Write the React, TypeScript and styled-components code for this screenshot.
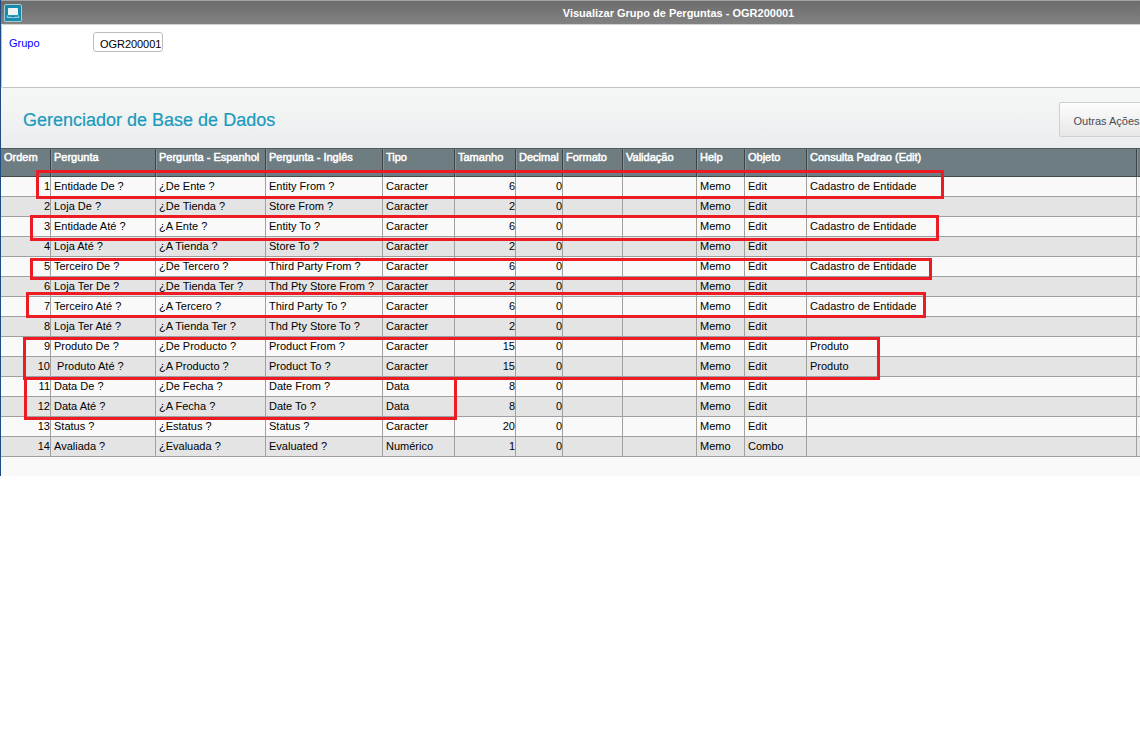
import React from "react";
import styled, { createGlobalStyle } from "styled-components";

const GlobalStyle = createGlobalStyle`
  * { box-sizing: border-box; }
  html, body { margin: 0; background: #fff; overflow: hidden; }
  body { font: 11px/13px "Liberation Sans", Arial, sans-serif; color: #000; }
`;

const Window = styled.main`
  position: relative;
  width: 1140px;
  height: 476px;
  overflow: hidden;
  border-left: 1px solid #1d4d84;
  background: #f9f9f9;
`;

const TitleBar = styled.header`
  display: flex;
  align-items: center;
  height: 24px;
  padding-left: 3px;
  border-top: 1px solid #a3a3a3;
  background: linear-gradient(#6c6c6c, #828282);
`;

const Title = styled.h1`
  flex: 1;
  margin: 2px 0 0;
  padding-left: 195px;
  text-align: center;
  font-size: 11px;
  line-height: 13px;
  color: #fff;
`;

const GroupPanel = styled.section`
  display: flex;
  align-items: flex-start;
  height: 64px;
  padding: 7px 0 0 7px;
  border: 1px solid #c3c3c3;
  border-top: 1px solid #d2d2d2;
  border-right: 0;
  border-radius: 2px 0 0 2px;
  background: #fff;
`;

const Label = styled.label`
  width: 84px;
  padding-top: 5px;
  color: #0000ff;
`;

const GroupField = styled.div`
  width: 70px;
  height: 20px;
  padding: 5px 0 0 6px;
  border: 1px solid #bdbdbd;
  border-radius: 3px;
  white-space: nowrap;
  letter-spacing: -0.05px;
  color: #000;
`;

const Toolbar = styled.section`
  display: flex;
  justify-content: space-between;
  height: 60px;
  padding-left: 22px;
  background: linear-gradient(#f5f6f6, #f3f5f4 30%, #ebecef);
`;

const Heading = styled.h2`
  margin: 22px 0 0;
  font-size: 18px;
  line-height: 21px;
  font-weight: 400;
  color: #1a9abc;
  -webkit-text-stroke: 0.2px #1a9abc;
  white-space: nowrap;
`;

const ActionsButton = styled.button`
  flex: none;
  width: 90px;
  height: 35px;
  margin: 14px -9px 0 0;
  padding: 3px 0 0 13.5px;
  border: 1px solid #d0d0d0;
  border-radius: 2px;
  background: linear-gradient(#fdfdfd, #e7e7e7);
  font: 11px/13px "Liberation Sans", Arial, sans-serif;
  text-align: left;
  white-space: nowrap;
  color: #474b55;
`;

const Row = styled.div<{ $alt?: boolean }>`
  display: grid;
  grid-template-columns: 50px 105px 110px 117px 72px 61px 47px 60px 74px 48px 62px 330px 3px;
  height: 20px;
  background: ${(p) => (p.$alt ? "#e4e4e4" : "#f9f9f9")};
`;

const HeaderRow = styled(Row)`
  height: 29px;
  border-top: 1px solid #555b5d;
  background: #6e7d81;
`;

const HeaderCell = styled.div`
  padding: 2px 0 0 3px;
  border-right: 1px solid #3b4345;
  border-bottom: 1px solid #41484a;
  font-weight: 400;
  -webkit-text-stroke: 0.5px #fff;
  white-space: nowrap;
  overflow: hidden;
  color: #fff;
  & + & { border-left: 1px solid #87969a; padding-left: 2px; }
  &:last-child { border-right: 0; }
`;

const Cell = styled.div<{ $numeric?: boolean }>`
  padding: ${(p) => (p.$numeric ? "3px 0 0" : "3px 0 0 3px")};
  border-right: 1px solid #a0a0a0;
  border-bottom: 1px solid #a0a0a0;
  text-align: ${(p) => (p.$numeric ? "right" : "left")};
  white-space: pre;
  &:last-child { border-right: 0; }
`;

const Highlight = styled.div<{ $x: number; $y: number; $w: number; $h: number }>`
  position: absolute;
  left: ${(p) => p.$x - 1}px;
  top: ${(p) => p.$y}px;
  width: ${(p) => p.$w}px;
  height: ${(p) => p.$h}px;
  border: 3px solid #ed1c24;
  pointer-events: none;
`;

const columns = [
  "Ordem", "Pergunta", "Pergunta - Espanhol", "Pergunta - Inglês", "Tipo", "Tamanho",
  "Decimal", "Formato", "Validação", "Help", "Objeto", "Consulta Padrao (Edit)", "",
];
const numericColumns = [0, 5, 6];

const questions: [string, string, string, string, string, string, string][] = [
  ["Entidade De ?", "¿De Ente ?", "Entity From ?", "Caracter", "6", "Edit", "Cadastro de Entidade"],
  ["Loja De ?", "¿De Tienda ?", "Store From ?", "Caracter", "2", "Edit", ""],
  ["Entidade Até ?", "¿A Ente ?", "Entity To ?", "Caracter", "6", "Edit", "Cadastro de Entidade"],
  ["Loja Até ?", "¿A Tienda ?", "Store To ?", "Caracter", "2", "Edit", ""],
  ["Terceiro De ?", "¿De Tercero ?", "Third Party From ?", "Caracter", "6", "Edit", "Cadastro de Entidade"],
  ["Loja Ter De ?", "¿De Tienda Ter ?", "Thd Pty Store From ?", "Caracter", "2", "Edit", ""],
  ["Terceiro Até ?", "¿A Tercero ?", "Third Party To ?", "Caracter", "6", "Edit", "Cadastro de Entidade"],
  ["Loja Ter Até ?", "¿A Tienda Ter ?", "Thd Pty Store To ?", "Caracter", "2", "Edit", ""],
  ["Produto De ?", "¿De Producto ?", "Product From ?", "Caracter", "15", "Edit", "Produto"],
  [" Produto Até ?", "¿A Producto ?", "Product To ?", "Caracter", "15", "Edit", "Produto"],
  ["Data De ?", "¿De Fecha ?", "Date From ?", "Data", "8", "Edit", ""],
  ["Data Até ?", "¿A Fecha ?", "Date To ?", "Data", "8", "Edit", ""],
  ["Status ?", "¿Estatus ?", "Status ?", "Caracter", "20", "Edit", ""],
  ["Avaliada ?", "¿Evaluada ?", "Evaluated ?", "Numérico", "1", "Combo", ""],
];

const highlights = [
  [36, 170, 908, 29],
  [30, 215, 909, 26],
  [30, 258, 902, 22],
  [26, 292, 900, 26],
  [23, 337, 857, 43],
  [24, 377, 433, 43],
];

const AppIcon = () => (
  <svg width="18" height="18" viewBox="0 0 18 18">
    <rect x="0.5" y="0.5" width="17" height="17" rx="1.5" fill="#188bad" stroke="#a9c9d2" />
    <rect x="4" y="4" width="10" height="7" rx="0.5" fill="#eef2f2" />
    <path d="M3.5 11.5L3 13.5H15L14.5 11.5" fill="#2d9dbc" stroke="#8fcfdf" />
    <path d="M8 12.5H10" stroke="#126b87" />
  </svg>
);

export default function App() {
  return (
    <>
      <GlobalStyle />
      <Window>
        <TitleBar>
          <AppIcon />
          <Title>Visualizar Grupo de Perguntas - OGR200001</Title>
        </TitleBar>
        <GroupPanel>
          <Label>Grupo</Label>
          <GroupField>OGR200001</GroupField>
        </GroupPanel>
        <Toolbar>
          <Heading>Gerenciador de Base de Dados</Heading>
          <ActionsButton>Outras Ações</ActionsButton>
        </Toolbar>
        <HeaderRow>
          {columns.map((name, i) => <HeaderCell key={i}>{name}</HeaderCell>)}
        </HeaderRow>
        {questions.map(([pt, es, en, type, size, object, lookup], r) => (
          <Row key={r} $alt={r % 2 === 1}>
            {[String(r + 1), pt, es, en, type, size, "0", "", "", "Memo", object, lookup, ""].map((value, c) => (
              <Cell key={c} $numeric={numericColumns.includes(c)}>{value}</Cell>
            ))}
          </Row>
        ))}
        {highlights.map(([x, y, w, h]) => <Highlight key={y} $x={x} $y={y} $w={w} $h={h} />)}
      </Window>
    </>
  );
}
